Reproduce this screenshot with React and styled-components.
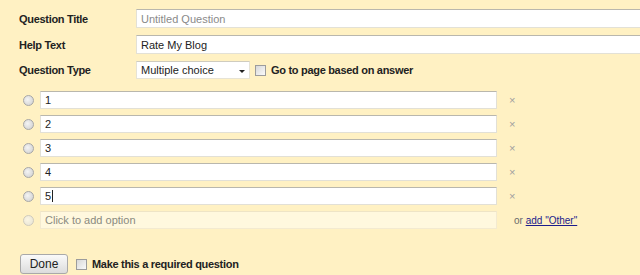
import styled, { createGlobalStyle } from 'styled-components';

const GlobalStyle = createGlobalStyle`
  html, body {
    margin: 0;
    padding: 0;
    background: #fff1c3;
    overflow: hidden;
  }
  body {
    font-family: "Liberation Sans", Arial, sans-serif;
    font-size: 11px;
    color: #222;
  }
`;

const options = ['1', '2', '3', '4', '5'];

const Editor = () => {
  return (
    <Page>
      <GlobalStyle />
      <Fields>
        <Label>Question Title</Label>
        <TextBox $placeholder>Untitled Question</TextBox>
        <Label>Help Text</Label>
        <TextBox>Rate My Blog</TextBox>
        <Label>Question Type</Label>
        <TypeRow>
          <Select>
            Multiple choice
            <Arrow />
          </Select>
          <Check />
          <CheckText>Go to page based on answer</CheckText>
        </TypeRow>
      </Fields>

      <OptionList>
        {options.map((opt, i) => (
          <OptionRow key={opt}>
            <Radio />
            <OptionBox>
              {opt}
              {i === options.length - 1 && <Caret />}
            </OptionBox>
            <Remove>×</Remove>
          </OptionRow>
        ))}
        <OptionRow>
          <Radio $faded />
          <OptionBox $add>Click to add option</OptionBox>
          <OtherText>
            or <OtherLink href="#">add "Other"</OtherLink>
          </OtherText>
        </OptionRow>
      </OptionList>

      <Footer>
        <DoneButton>Done</DoneButton>
        <Check />
        <CheckText>Make this a required question</CheckText>
      </Footer>
    </Page>
  );
};

const Page = styled.div`
  padding: 9px 0 0 19px;
`;

const Fields = styled.div`
  display: grid;
  grid-template-columns: 117px 1fr;
  row-gap: 7px;
  align-items: center;
`;

const Label = styled.div`
  font-weight: bold;
  font-size: 11px;
  letter-spacing: -0.3px;
  color: #222;
`;

const TextBox = styled.div`
  box-sizing: border-box;
  height: 19px;
  padding: 0 0 0 4px;
  display: flex;
  align-items: center;
  background: #fff;
  border: 1px solid #e3e1d6;
  border-right: none;
  border-top-color: #b9b7ad;
  color: ${(p) => (p.$placeholder ? '#8a8a8a' : '#222')};
  font-size: 11px;
`;

const TypeRow = styled.div`
  display: flex;
  align-items: center;
`;

const Select = styled.div`
  box-sizing: border-box;
  width: 114px;
  height: 18px;
  padding: 0 0 0 4px;
  display: flex;
  align-items: center;
  justify-content: space-between;
  background: #fff;
  border: 1px solid #e6e3d6;
  border-top-color: #cfccbf;
  font-size: 11px;
  color: #222;
`;

const Arrow = styled.span`
  width: 0;
  height: 0;
  margin-right: 4px;
  margin-top: 2px;
  border-left: 3px solid transparent;
  border-right: 3px solid transparent;
  border-top: 3px solid #222;
`;

const Check = styled.span`
  box-sizing: border-box;
  display: inline-block;
  width: 11px;
  height: 11px;
  margin: 0 5px 0 5px;
  border: 1px solid #9c9c9c;
  background: linear-gradient(135deg, #d8d8d8, #fafafa);
`;

const CheckText = styled.span`
  font-weight: bold;
  font-size: 11px;
  letter-spacing: -0.3px;
  color: #222;
`;

const OptionList = styled.div`
  margin-top: 12px;
  display: flex;
  flex-direction: column;
  gap: 6px;
`;

const OptionRow = styled.div`
  display: flex;
  align-items: center;
  height: 18px;
`;

const Radio = styled.span`
  box-sizing: border-box;
  width: 11px;
  height: 11px;
  margin: 0 6px 0 4px;
  border-radius: 50%;
  border: 1px solid ${(p) => (p.$faded ? '#cfcbbd' : '#a7a7a7')};
  background: ${(p) =>
    p.$faded
      ? 'radial-gradient(circle at 40% 40%, #fbf6e4, #e6e2d3)'
      : 'radial-gradient(circle at 40% 40%, #f4f4f4, #cdcdcd)'};
`;

const OptionBox = styled.div`
  box-sizing: border-box;
  width: 457px;
  height: 18px;
  padding-left: 4px;
  display: flex;
  align-items: center;
  background: ${(p) => (p.$add ? '#fff8de' : '#fff')};
  border: 1px solid ${(p) => (p.$add ? '#f3ead0' : '#e2e0d6')};
  border-top-color: ${(p) => (p.$add ? '#eee4c6' : '#b9b7ad')};
  color: ${(p) => (p.$add ? '#8a8a80' : '#222')};
  font-size: 11px;
`;

const Caret = styled.span`
  display: inline-block;
  width: 1px;
  height: 12px;
  margin-left: 1px;
  background: #222;
`;

const Remove = styled.span`
  margin-left: 12px;
  color: #a0a0a0;
  font-size: 11px;
`;

const OtherText = styled.span`
  margin-left: 17px;
  color: #6a6a6a;
  font-size: 10px;
`;

const OtherLink = styled.a`
  color: #1c1c8c;
  text-decoration: underline;
`;

const Footer = styled.div`
  margin-top: 25px;
  display: flex;
  align-items: center;
`;

const DoneButton = styled.button`
  box-sizing: border-box;
  width: 48px;
  height: 20px;
  margin: 0 3px 0 1px;
  padding: 0;
  font-family: "Liberation Sans", Arial, sans-serif;
  font-size: 12px;
  color: #222;
  border: 1px solid #a9a9a9;
  border-radius: 3px;
  background: linear-gradient(#fafafa, #dcdcdc);
`;

export default Editor;
